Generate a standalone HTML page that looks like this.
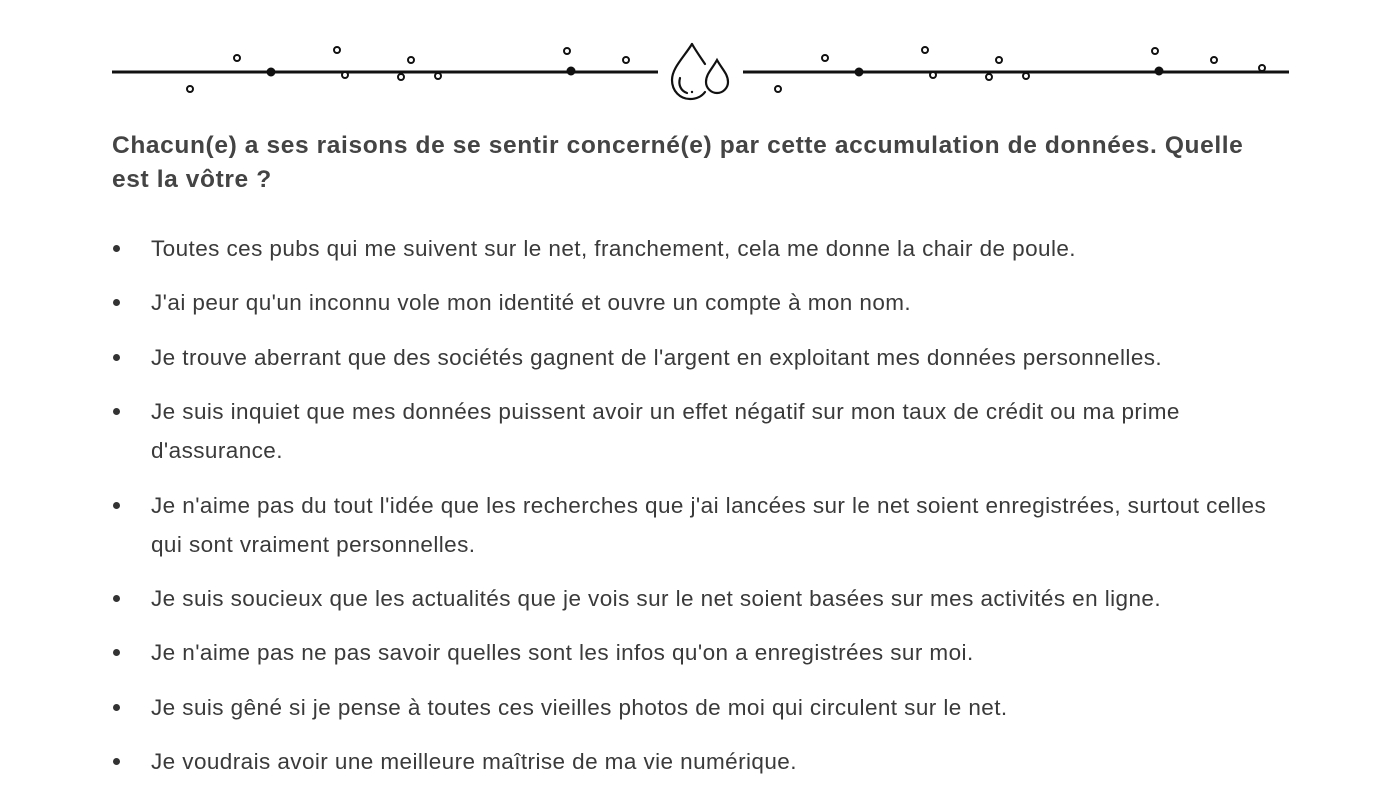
<!DOCTYPE html>
<html><head><meta charset="utf-8"><style>
body{margin:0;width:1400px;height:788px;background:#fff;overflow:hidden;font-family:"Liberation Sans",sans-serif;}
svg{position:absolute;left:0;top:0}
h2{position:absolute;left:112px;top:129px;margin:0;font-size:24.5px;letter-spacing:0.62px;line-height:34px;font-weight:bold;color:#444;white-space:nowrap}
ul{position:absolute;left:112px;top:229px;margin:0;padding:0;list-style:none;color:#3a3a3a;font-size:22.5px;letter-spacing:0.42px}
li{position:relative;padding-left:39px;line-height:39px;margin-bottom:15.4px;white-space:nowrap}
li:before{content:"";position:absolute;left:1px;top:16px;width:7px;height:7px;border-radius:50%;background:#333}
</style></head><body>
<svg width="1400" height="120" viewBox="0 0 1400 120" fill="none" stroke="#111">
<line x1="112" y1="72" x2="658" y2="72" stroke-width="3"/>
<line x1="743" y1="72" x2="1289" y2="72" stroke-width="3"/>
<g stroke-width="2" fill="#fff">
<circle cx="190" cy="89" r="3"/><circle cx="237" cy="58" r="3"/><circle cx="337" cy="50" r="3"/><circle cx="345" cy="75" r="3"/><circle cx="401" cy="77" r="3"/><circle cx="411" cy="60" r="3"/><circle cx="438" cy="76" r="3"/><circle cx="567" cy="51" r="3"/><circle cx="626" cy="60" r="3"/>
<circle cx="778" cy="89" r="3"/><circle cx="825" cy="58" r="3"/><circle cx="925" cy="50" r="3"/><circle cx="933" cy="75" r="3"/><circle cx="989" cy="77" r="3"/><circle cx="999" cy="60" r="3"/><circle cx="1026" cy="76" r="3"/><circle cx="1155" cy="51" r="3"/><circle cx="1214" cy="60" r="3"/><circle cx="1262" cy="68" r="3"/>
</g>
<g fill="#111"><circle cx="271" cy="72" r="4"/><circle cx="571" cy="71" r="4"/><circle cx="859" cy="72" r="4"/><circle cx="1159" cy="71" r="4"/></g>
<g stroke-width="2.2" stroke-linecap="round">
<path d="M692 44 C684 57 672 68 672 80 C672 91 680 99 690 99 C697 99 702 96 705 92"/>
<path d="M692 44 C696 51 701 58 705 64"/>
<path d="M717 60 C712 69 706 74 706 82 C706 88 711 93 717 93 C723 93 728 88 728 82 C728 74 722 69 717 60Z"/>
<path d="M680 78 C678 85 681 91 687 93"/>
</g>
<circle cx="692" cy="92" r="1.2" fill="#111" stroke="none"/>
</svg>
<h2>Chacun(e) a ses raisons de se sentir concerné(e) par cette accumulation de données. Quelle<br>est la vôtre ?</h2>
<ul>
<li>Toutes ces pubs qui me suivent sur le net, franchement, cela me donne la chair de poule.</li>
<li>J'ai peur qu'un inconnu vole mon identité et ouvre un compte à mon nom.</li>
<li>Je trouve aberrant que des sociétés gagnent de l'argent en exploitant mes données personnelles.</li>
<li>Je suis inquiet que mes données puissent avoir un effet négatif sur mon taux de crédit ou ma prime<br>d'assurance.</li>
<li>Je n'aime pas du tout l'idée que les recherches que j'ai lancées sur le net soient enregistrées, surtout celles<br>qui sont vraiment personnelles.</li>
<li>Je suis soucieux que les actualités que je vois sur le net soient basées sur mes activités en ligne.</li>
<li>Je n'aime pas ne pas savoir quelles sont les infos qu'on a enregistrées sur moi.</li>
<li>Je suis gêné si je pense à toutes ces vieilles photos de moi qui circulent sur le net.</li>
<li>Je voudrais avoir une meilleure maîtrise de ma vie numérique.</li>
</ul>
</body></html>
